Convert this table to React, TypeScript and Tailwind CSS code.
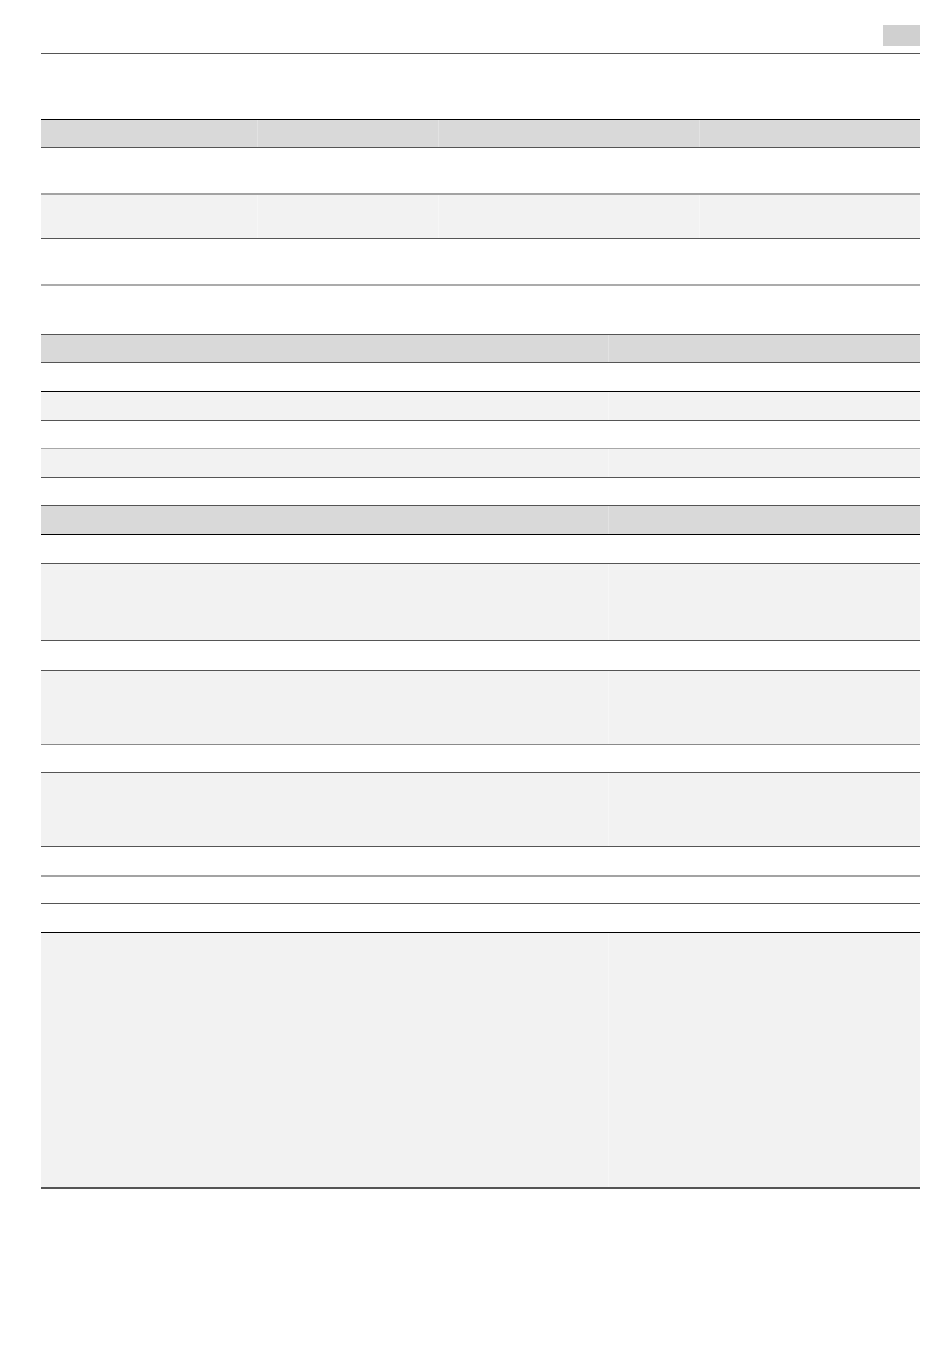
import React from "react";

type RowSpec = { h: string; bg: "head" | "gray" | "white"; border: string };

function Row({ spec, cols, grid }: { spec: RowSpec; cols: number; grid: string }) {
  const bg =
    spec.bg === "head" ? "bg-[#d9d9d9]" : spec.bg === "gray" ? "bg-[#f2f2f2]" : "bg-white";
  const sep =
    spec.bg === "head"
      ? "border-l border-[#e2e2e2]"
      : spec.bg === "gray"
      ? "border-l border-[#f6f6f6]"
      : "border-l border-white";
  return (
    <div className={`grid ${grid} ${spec.h} ${spec.border} ${bg}`}>
      {Array.from({ length: cols }).map((_, i) => (
        <div key={i} className={i === 0 ? "" : sep} />
      ))}
    </div>
  );
}

const t1: RowSpec[] = [
  { h: "h-[28px]", bg: "head", border: "border-t border-black" },
  { h: "h-[46px]", bg: "white", border: "border-t border-[#555555]" },
  { h: "h-[45px]", bg: "gray", border: "border-t-2 border-[#a3a3a3]" },
  { h: "h-[46px]", bg: "white", border: "border-t border-[#555555]" },
];

const t2: RowSpec[] = [
  { h: "h-[28px]", bg: "head", border: "border-t border-[#555555]" },
  { h: "h-[29px]", bg: "white", border: "border-t border-[#555555]" },
  { h: "h-[29px]", bg: "gray", border: "border-t border-black" },
  { h: "h-[28px]", bg: "white", border: "border-t border-[#555555]" },
  { h: "h-[29px]", bg: "gray", border: "border-t border-[#a8a8a8]" },
];

const t3: RowSpec[] = [
  { h: "h-[29px]", bg: "head", border: "border-t border-[#555555]" },
  { h: "h-[29px]", bg: "white", border: "border-t border-black" },
  { h: "h-[77px]", bg: "gray", border: "border-t border-[#555555]" },
  { h: "h-[30px]", bg: "white", border: "border-t border-[#555555]" },
  { h: "h-[74px]", bg: "gray", border: "border-t border-[#555555]" },
  { h: "h-[28px]", bg: "white", border: "border-t border-[#8a8a8a]" },
  { h: "h-[74px]", bg: "gray", border: "border-t border-[#555555]" },
  { h: "h-[29px]", bg: "white", border: "border-t border-[#555555]" },
  { h: "h-[28px]", bg: "white", border: "border-t-2 border-[#a3a3a3]" },
  { h: "h-[29px]", bg: "white", border: "border-t border-[#555555]" },
  { h: "h-[255px]", bg: "gray", border: "border-t border-black" },
];

export default function App() {
  return (
    <div className="w-[950px] h-[1369px] bg-white font-['Liberation_Sans',sans-serif]">
      <div className="ml-[41px] w-[879px] flex flex-col">
        <div className="h-[54px] border-b border-[#555555] flex justify-end">
          <div className="mt-[25px] h-[21px] w-[37px] bg-[#d0d0d0]" />
        </div>

        <div className="mt-[65px] flex flex-col border-b-2 border-[#ababab]">
          {t1.map((s, i) => (
            <Row key={i} spec={s} cols={4} grid="grid-cols-[216px_181px_261px_221px]" />
          ))}
        </div>

        <div className="mt-[48px] flex flex-col border-b border-[#555555]">
          {t2.map((s, i) => (
            <Row key={i} spec={s} cols={2} grid="grid-cols-[567px_312px]" />
          ))}
        </div>

        <div className="mt-[27px] flex flex-col border-b-2 border-[#555555]">
          {t3.map((s, i) => (
            <Row key={i} spec={s} cols={2} grid="grid-cols-[567px_312px]" />
          ))}
        </div>
      </div>
    </div>
  );
}
